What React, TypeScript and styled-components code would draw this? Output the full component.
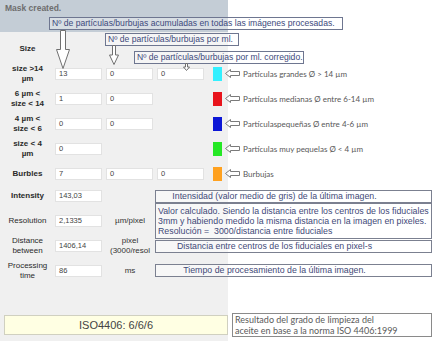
import styled, { createGlobalStyle } from "styled-components"

const GlobalStyle = createGlobalStyle`
	body {
		margin: 0;
		font-family: "Liberation Sans", Arial, sans-serif;
	}
`

const sizeRows = [
	{ label: ["size >14", "µm"], values: ["13", "0", "0"], color: "#33f0ff", legend: "Partículas grandes Ø > 14 µm" },
	{ label: ["6 µm <", "size < 14"], values: ["1", "0"], color: "#e8141c", legend: "Partículas medianas Ø entre 6-14 µm" },
	{ label: ["4 µm <", "size < 6"], values: ["0", "0"], color: "#0c16d6", legend: "Partículaspequeñas Ø entre 4-6 µm" },
	{ label: ["size < 4", "µm"], values: ["0"], color: "#25e825", legend: "Partículas muy pequelas Ø < 4 µm" },
	{ label: ["Burbles"], values: ["7", "0", "0"], color: "#ffa11f", legend: "Burbujas" },
]

const DownArrow = ({ w, h, shaft }: { w: number; h: number; shaft: number }) => {
	const cx = w / 2
	const s = shaft / 2
	const neck = h * 0.5
	return (
		<svg width={w} height={h} viewBox={`0 0 ${w} ${h}`}>
			<polygon
				points={`${cx - s},0.5 ${cx + s},0.5 ${cx + s},${neck} ${w - 0.5},${neck} ${cx},${h - 0.5} 0.5,${neck} ${cx - s},${neck}`}
				fill="#fff"
				stroke="#707070"
				strokeWidth="1"
			/>
		</svg>
	)
}

const LeftArrow = () => (
	<svg width="15" height="9" viewBox="0 0 15 9">
		<polygon points="0.5,4.5 5.5,0.5 5.5,2.5 14.5,2.5 14.5,6.5 5.5,6.5 5.5,8.5" fill="#fff" stroke="#7a7a7a" strokeWidth="1" />
	</svg>
)

const App = () => {
	return (
		<Page>
			<GlobalStyle />
			<StatusBar>Mask created.</StatusBar>

			<Form>
				<Row $h={25}>
					<Label $bold>Size</Label>
				</Row>

				{sizeRows.map((row, index) => (
					<Row $h={25} key={index}>
						<Label $bold>
							{row.label.map((line, i) => (
								<div key={i}>{line}</div>
							))}
						</Label>
						<Fields>
							{row.values.map((value, i) => (
								<Field key={i}>{value}</Field>
							))}
						</Fields>
						<Swatch $color={row.color} />
						<Legend>
							<LeftArrow />
							<span>{row.legend}</span>
						</Legend>
					</Row>
				))}

				<Row $h={20}>
					<Label $bold>Intensity</Label>
					<Field>143,03</Field>
					<Unit />
					<Note $center>Intensidad (valor medio de gris) de la última imagen.</Note>
				</Row>

				<Row $h={29}>
					<Label>Resolution</Label>
					<Field>2,1335</Field>
					<Unit>µm/pixel</Unit>
					<Note $tall>
						Valor calculado. Siendo la distancia entre los centros de los fiduciales
						<br />
						3mm y habiendo medido la misma distancia en la imagen en pixeles.
						<br />
						Resolución =&nbsp; 3000/distancia entre fiduciales
					</Note>
				</Row>

				<Row $h={22}>
					<Label>
						<div>Distance</div>
						<div>between</div>
					</Label>
					<Field>1406,14</Field>
					<Unit>
						<div>pixel</div>
						<div>(3000/resol</div>
					</Unit>
					<Note $center>Distancia entre centros de los fiduciales en pixel-s</Note>
				</Row>

				<Row $h={27}>
					<Label>
						<div>Processing</div>
						<div>time</div>
					</Label>
					<Field>86</Field>
					<Unit>ms</Unit>
					<Note $center>Tiempo de procesamiento de la última imagen.</Note>
				</Row>
			</Form>

			<Footer>
				<IsoBar>ISO4406: 6/6/6</IsoBar>
				<ResultNote>
					Resultado del grado de limpieza del
					<br />
					aceite en base a la norma ISO 4406:1999
				</ResultNote>
			</Footer>

			<Callout $left={49} $top={17} $width={294}>
				Nº de partículas/burbujas acumuladas en todas las imágenes procesadas.
			</Callout>
			<Callout $left={105} $top={33} $width={134}>
				Nº de partículas/burbujas por ml.
			</Callout>
			<Callout $left={134} $top={51} $width={170}>
				Nº de partículas/burbujas por ml. corregido.
			</Callout>

			<Pointer $left={56} $top={30}>
				<DownArrow w={14} h={39} shaft={5} />
			</Pointer>
			<Pointer $left={109} $top={45}>
				<DownArrow w={10} h={20} shaft={3} />
			</Pointer>
			<Pointer $left={183} $top={63}>
				<DownArrow w={7} h={8} shaft={2} />
			</Pointer>
		</Page>
	)
}

export default App

const Page = styled.div`
	position: relative;
	width: 436px;
	height: 341px;
	overflow: hidden;
	display: flex;
	flex-direction: column;
	background: linear-gradient(90deg, #f0f0f0 0 228px, #ffffff 228px);
`

const StatusBar = styled.div`
	width: 228px;
	height: 32px;
	flex: none;
	box-sizing: border-box;
	padding: 3px 5px;
	background: #c4cdd6;
	color: #6e6e6e;
	font-size: 8.5px;
	font-weight: bold;
	line-height: 10px;
`

const Form = styled.div`
	display: flex;
	flex-direction: column;
	padding-top: 4px;
`

const Row = styled.div<{ $h: number }>`
	display: flex;
	align-items: center;
	height: ${(p) => p.$h}px;
`

const Label = styled.div<{ $bold?: boolean }>`
	width: 55px;
	flex: none;
	text-align: center;
	font-size: 8px;
	line-height: 10px;
	font-weight: ${(p) => (p.$bold ? "bold" : "normal")};
	color: #2a2a2a;
`

const Fields = styled.div`
	display: flex;
	gap: 4px;
	width: 149px;
	flex: none;
`

const Field = styled.div`
	width: 47px;
	height: 12px;
	flex: none;
	box-sizing: border-box;
	padding-left: 3px;
	background: #ffffff;
	border: 1px solid #e2e2e2;
	font-size: 7.5px;
	line-height: 10px;
	color: #444;
`

const Swatch = styled.div<{ $color: string }>`
	width: 9px;
	height: 14px;
	margin-left: 9px;
	flex: none;
	background: ${(p) => p.$color};
`

const Legend = styled.div`
	display: flex;
	align-items: center;
	gap: 3px;
	margin-left: 3px;
	font-family: Lato, "Liberation Sans", sans-serif;
	font-size: 8px;
	color: #585858;
	white-space: nowrap;
`

const Unit = styled.div`
	width: 44px;
	margin-left: 6px;
	flex: none;
	white-space: nowrap;
	text-align: center;
	font-size: 8px;
	line-height: 10px;
	color: #333;
`

const Note = styled.div<{ $center?: boolean; $tall?: boolean }>`
	width: 277px;
	height: ${(p) => (p.$tall ? 36 : 13)}px;
	margin-left: 3px;
	flex: none;
	box-sizing: border-box;
	padding: ${(p) => (p.$tall ? "2px 2px" : "0 40px 0 2px")};
	border: 1px solid #7b8090;
	background: rgba(255, 255, 255, 0.45);
	color: #3f4a78;
	font-size: 8.8px;
	line-height: ${(p) => (p.$tall ? 10 : 11)}px;
	text-align: ${(p) => (p.$center ? "center" : "left")};
	white-space: nowrap;
`

const Footer = styled.div`
	display: flex;
	align-items: center;
	gap: 4px;
	margin-top: 29px;
	padding-left: 4px;
`

const IsoBar = styled.div`
	width: 224px;
	height: 20px;
	box-sizing: border-box;
	border: 1px solid #d0d0c0;
	background: #ffffe3;
	color: #444;
	font-size: 11px;
	line-height: 18px;
	text-align: center;
`

const ResultNote = styled.div`
	width: 200px;
	height: 24px;
	box-sizing: border-box;
	padding: 0 2px;
	border: 1px solid #8a8a8a;
	font-family: Lato, "Liberation Sans", sans-serif;
	font-size: 9px;
	line-height: 11px;
	color: #5a5a5a;
`

const Callout = styled.div<{ $left: number; $top: number; $width: number }>`
	position: absolute;
	left: ${(p) => p.$left}px;
	top: ${(p) => p.$top}px;
	width: ${(p) => p.$width}px;
	height: 13px;
	box-sizing: border-box;
	padding: 0 2px;
	border: 1px solid #6e7690;
	background: rgba(255, 255, 255, 0.35);
	color: #3d4a7c;
	font-size: 8.6px;
	line-height: 11px;
	white-space: nowrap;
`

const Pointer = styled.div<{ $left: number; $top: number }>`
	position: absolute;
	left: ${(p) => p.$left}px;
	top: ${(p) => p.$top}px;
	line-height: 0;
`
